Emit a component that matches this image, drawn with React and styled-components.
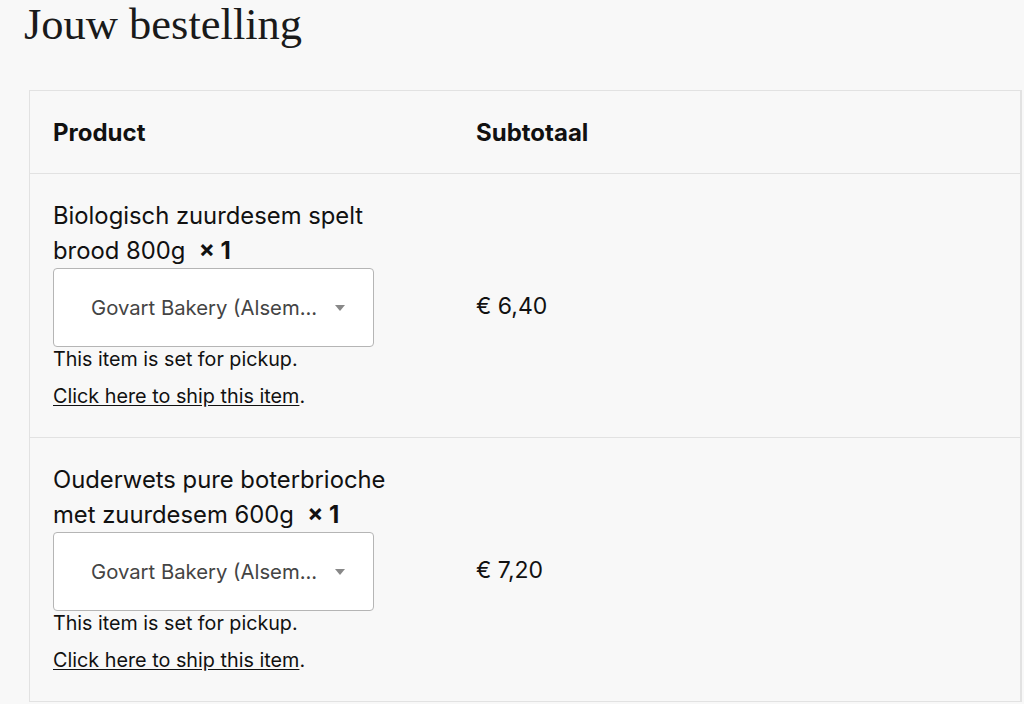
import styled, { createGlobalStyle } from "styled-components";

const GlobalStyle = createGlobalStyle`
  html, body {
    margin: 0;
    padding: 0;
    background: #f8f8f8;
    font-family: Inter, "Noto Sans", sans-serif;
    color: #111;
  }
`

const items = [
    { name: "Biologisch zuurdesem spelt brood 800g", qty: 1, price: "€ 6,40" },
    { name: "Ouderwets pure boterbrioche met zuurdesem 600g", qty: 1, price: "€ 7,20" },
]

function OrderRow({ item }) {
    return (
        <tr>
            <Cell>
                <ProductName>
                    {item.name}&nbsp; <Qty>×&nbsp;{item.qty}</Qty>
                </ProductName>
                <Select>
                    <SelectText>Govart Bakery (Alsem...</SelectText>
                    <Arrow />
                </Select>
                <Note>This item is set for pickup.</Note>
                <ShipLine><ShipLink href="#">Click here to ship this item</ShipLink>.</ShipLine>
            </Cell>
            <PriceCell>{item.price}</PriceCell>
        </tr>
    )
}

function App() {
    return (
        <Page>
            <GlobalStyle />
            <Title>Jouw bestelling</Title>
            <Table>
                <thead>
                    <tr>
                        <HeadCell>Product</HeadCell>
                        <HeadCell>Subtotaal</HeadCell>
                    </tr>
                </thead>
                <tbody>
                    {items.map(item => <OrderRow key={item.name} item={item} />)}
                </tbody>
            </Table>
        </Page>
    )
}

export default App

const Page = styled.div`
    padding: 0 2px 0 24px;
`

const Title = styled.h1`
    font-family: "Liberation Serif", serif;
    font-weight: 400;
    font-size: 44.5px;
    line-height: 44px;
    margin: 0;
    padding-top: 2px;
    height: 88px;
    color: #1a1a1a;
`

const Table = styled.table`
    border-collapse: collapse;
    width: calc(100% - 5px);
    margin-left: 5px;
    border: 1px solid #e2e2e2;
    border-right-width: 2px;
`

const HeadCell = styled.th`
    text-align: left;
    font-size: 24px;
    font-weight: 700;
    line-height: 35px;
    padding: 24px 23px 23px;
    border-bottom: 1px solid #e2e2e2;
    &:first-child {
        width: 377px;
    }
`

const Cell = styled.td`
    padding: 24px 23px 28px;
    vertical-align: top;
    border-bottom: 1px solid #e2e2e2;
`

const PriceCell = styled.td`
    padding: 0 23px;
    vertical-align: middle;
    font-size: 23px;
    border-bottom: 1px solid #e2e2e2;
`

const ProductName = styled.div`
    font-size: 23.8px;
    line-height: 35px;
    width: 350px;
`

const Qty = styled.strong`
    font-weight: 700;
    white-space: nowrap;
`

const Select = styled.div`
    display: flex;
    align-items: center;
    box-sizing: border-box;
    width: 321px;
    height: 79px;
    padding: 0 28px 0 37px;
    background: #fff;
    border: 1px solid #b5b5b5;
    border-radius: 4px;
`

const SelectText = styled.span`
    flex: 1;
    font-size: 20.3px;
    color: #444;
    white-space: nowrap;
`

const Arrow = styled.span`
    width: 0;
    height: 0;
    border-left: 5px solid transparent;
    border-right: 5px solid transparent;
    border-top: 6px solid #888;
`

const Note = styled.div`
    font-size: 19.7px;
    line-height: 25px;
`

const ShipLine = styled.div`
    font-size: 19.8px;
    line-height: 26px;
    margin-top: 11px;
`

const ShipLink = styled.a`
    color: #111;
    text-decoration: underline;
    text-underline-offset: 2px;
`
